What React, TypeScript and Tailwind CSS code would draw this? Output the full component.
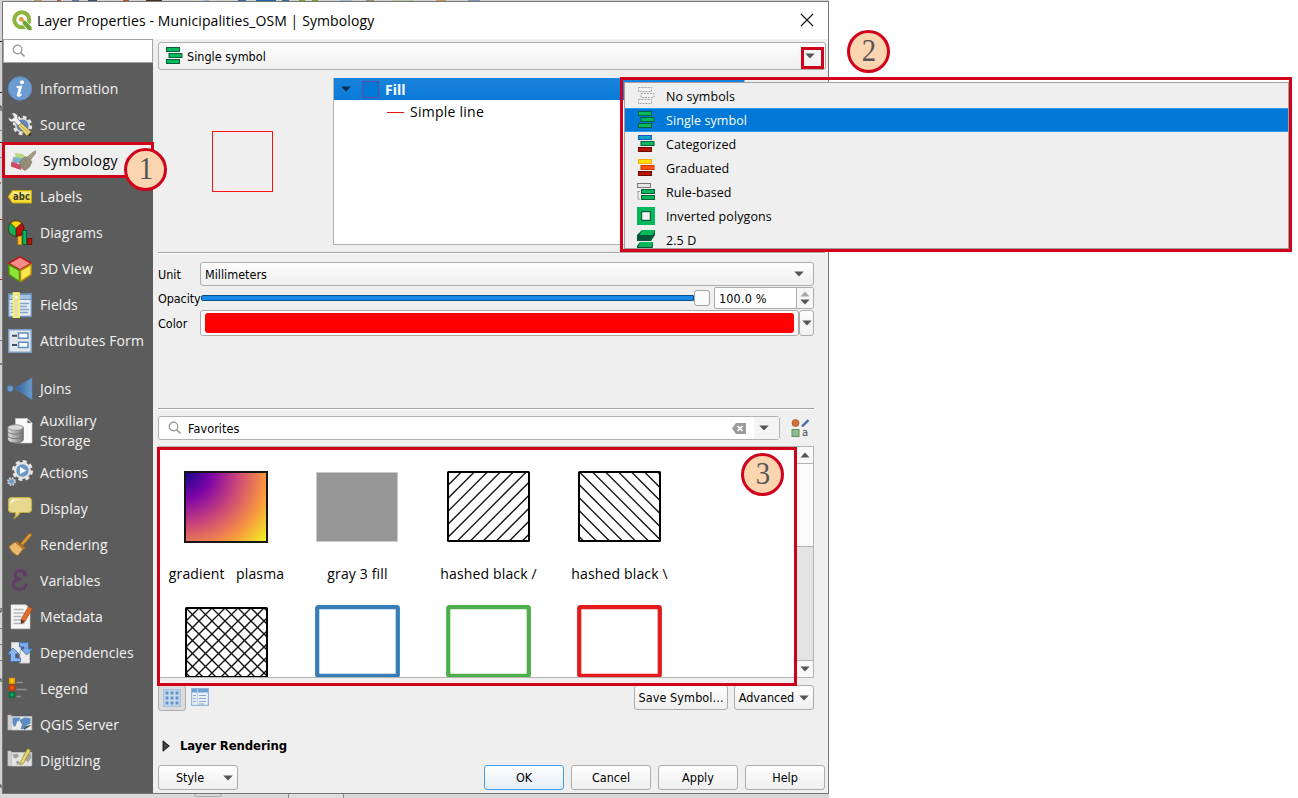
import React from "react";

/* ---------- Sidebar icons (26 x 26) ---------- */

const Svg = ({ children }: { children: React.ReactNode }) => (
  <svg width="26" height="26" viewBox="0 0 26 26" className="shrink-0">
    {children}
  </svg>
);

const InfoIcon = () => (
  <Svg>
    <circle cx="13" cy="12.500" r="11.800" fill="#6b9bd0" stroke="#5c87bd" />
    <circle cx="15" cy="6.200" r="2" fill="#fff" />
    <path d="M9.500 10.800l5.300-.9-2.200 8.200c-.2 1 .5 1 1.600.1l.4.6c-1.600 1.700-4.700 2.400-4.300.1l1.700-6.400c.2-.8-.4-.9-2-.9z" fill="#fff" stroke="#fff" strokeWidth=".9" />
  </Svg>
);

const SourceIcon = () => (
  <Svg>
    <circle cx="15.500" cy="13.500" r="8.200" fill="none" stroke="#e6e6e6" strokeWidth="3" strokeDasharray="3.700 2.740" />
    <circle cx="15.500" cy="13.500" r="6.800" fill="#6288bb" stroke="#dcdcdc" strokeWidth="1.500" />
    <path d="M4.500 1.200C8 0 12 2.500 10.500 6.500L15.500 12l-3.300 3L7.500 9.500C4.500 11 1.200 9 1.500 5.500L5 7.200 7.200 5z" fill="#f1f1f1" stroke="#666" strokeWidth=".7" />
    <path d="M11 14.200l3.500-3.200 9.500 8.500-.8 3.500-3.700.5z" fill="#e6d478" stroke="#6f6128" strokeWidth=".8" />
    <path d="M13.500 13.500l8 7.500" stroke="#b5a14d" strokeWidth=".8" />
    <path d="M22.500 21l2 .5-1 2.200-2.500-.2z" fill="#33301c" />
  </Svg>
);

const SymbologyIcon = () => (
  <Svg>
    <path d="M5 5l8 1 4 5-11 3z" fill="#b9d77e" />
    <path d="M3 9l11 1.500 0 4-11.500 1z" fill="#76b3d5" />
    <path d="M3.500 9.500l3 .5-.8 4-3.200-1z" fill="#8ba7b8" />
    <path d="M1.500 13.500l10 3.500-.5 5L.8 18.500z" fill="#cf4a63" />
    <path d="M16.500 9.500L24 3.500q3-1.500 2 1.200L20 12.500z" fill="#a39b83" stroke="#837b66" strokeWidth=".6" />
    <path d="M9.500 14l5.500-5.500 7 5-2.500 5.500-4.500 3.500c-3.500-1.500-5.500-4.500-5.500-8.500z" fill="#9a927e" stroke="#6e6959" strokeWidth=".6" />
    <path d="M12 13l5 7M14 11l5 7M10.500 15.500l4 5.500" stroke="#7b7564" strokeWidth=".7" />
  </Svg>
);

const LabelsIcon = () => (
  <Svg>
    <path d="M1.200 12.800L5.500 6.500h19v12.500h-19z" fill="#f5dc3c" stroke="#c9a90c" strokeLinejoin="round" />
    <path d="M3.500 11.500L6.200 7.800H23.500v3.700z" fill="#fbeb7f" />
    <text x="14.500" y="16.200" textAnchor="middle" fontSize="10" fontWeight="bold" fill="#3c3c34" className="font-['DejaVu_Sans',sans-serif]" textLength="17" lengthAdjust="spacingAndGlyphs">abc</text>
  </Svg>
);

const DiagramsIcon = () => (
  <Svg>
    <circle cx="9" cy="8.500" r="7.800" fill="#0bb35c" stroke="#4f3a06" />
    <path d="M9 8.500L3.500 3a7.800 7.800 0 0 1 11.300.2z" fill="#ffd20a" stroke="#4f3a06" strokeWidth=".8" />
    <path d="M9 8.500l5.800-5.300A7.800 7.800 0 0 1 9 16.300z" fill="#b91407" stroke="#4f1006" strokeWidth=".8" />
    <rect x="11" y="16.500" width="3.600" height="8" fill="#ffc423" stroke="#d08a05" />
    <rect x="15.700" y="10.500" width="3.800" height="14" fill="#0bb35c" stroke="#066036" />
    <rect x="20.700" y="18.500" width="4" height="6" fill="#b91407" stroke="#750b03" />
  </Svg>
);

const CubeIcon = () => (
  <Svg>
    <path d="M13 .8l11.300 6.500L13 13.800 1.700 7.300z" fill="#f58c8c" stroke="#c01515" strokeWidth="1.500" />
    <path d="M1.700 8.500L12.500 14.500v11L2 18.500z" fill="#8de336" stroke="#4e8d12" strokeWidth="1.500" />
    <path d="M24.300 8.500L13.500 14.500v11l10.500-7z" fill="#fce94f" stroke="#b48d0b" strokeWidth="1.500" />
  </Svg>
);

const FieldsIcon = () => (
  <Svg>
    <rect x="1.700" y="2" width="22.600" height="22.500" fill="#e9edf3" stroke="#6d93c1" strokeWidth="1.500" />
    <rect x="2" y="2.500" width="22" height="5" fill="#a3c4e3" stroke="#6d93c1" />
    <path d="M3.500 11.500h3M13 11.500h9M3.500 14.500h3M13 14.500h7M3.500 17.500h3M13 17.500h9M3.500 20.500h3M13 20.500h8" stroke="#84a5cb" strokeWidth="1.300" />
    <rect x="6.500" y="1" width="5.500" height="24.500" fill="#e3ddb1" stroke="#f8f360" strokeWidth="1.700" />
    <circle cx="9.300" cy="5" r="1.300" fill="#fff" />
  </Svg>
);

const FormIcon = () => (
  <Svg>
    <rect x="1.700" y="1.700" width="22.600" height="22.600" fill="#e4e7ea" stroke="#7a9cc6" strokeWidth="1.500" />
    <rect x="11.500" y="5" width="9.500" height="5.200" fill="#fff" stroke="#5e8cc0" strokeWidth="1.500" />
    <rect x="11.500" y="14.300" width="9.500" height="5.200" fill="#fff" stroke="#5e8cc0" strokeWidth="1.500" />
    <path d="M5 7.800h5M5 17h5" stroke="#41506a" strokeWidth="2" />
  </Svg>
);

const JoinsIcon = () => (
  <Svg>
    <defs>
      <linearGradient id="join" x1="0" x2="1"><stop offset="0" stopColor="#315e96" /><stop offset="1" stopColor="#6c9ccd" /></linearGradient>
    </defs>
    <path d="M8 12.500L25 1.800v22z" fill="url(#join)" stroke="#4b7eb8" strokeWidth=".6" />
    <circle cx="3.200" cy="12.500" r="2.900" fill="#699acd" stroke="#4b7eb8" strokeWidth=".6" />
  </Svg>
);

const StorageIcon = () => (
  <Svg>
    <path d="M8.500.5h11.500l5 5v19.500h-16.500z" fill="#fafafa" stroke="#d0d0d0" strokeWidth=".6" />
    <path d="M20 .5v5h5z" fill="#5d5d5d" stroke="#eee" />
    <defs>
      <linearGradient id="db" x1="0" x2="1"><stop offset="0" stopColor="#e0e0e0" /><stop offset="1" stopColor="#757575" /></linearGradient>
    </defs>
    <path d="M.8 9v13c1.500 4 14 4 15.500 0V9z" fill="url(#db)" stroke="#666" strokeWidth=".8" />
    <path d="M.8 13.500c1.500 3.500 14 3.500 15.500 0M.8 18c1.500 3.500 14 3.500 15.500 0" fill="none" stroke="#777" />
    <ellipse cx="8.500" cy="9.500" rx="7.700" ry="2.800" fill="#d8d8d8" stroke="#888" strokeWidth=".8" />
  </Svg>
);

const ActionsIcon = () => (
  <Svg>
    <circle cx="15.500" cy="10.500" r="9" fill="none" stroke="#e4e4e4" strokeWidth="3" strokeDasharray="4 3.070" />
    <circle cx="15.500" cy="10.500" r="7.300" fill="#6b97cb" stroke="#e4e4e4" strokeWidth="2.200" />
    <path d="M13 7l6.500 3.500-6.500 3.500z" fill="#fff" />
    <circle cx="4.500" cy="21.500" r="3.600" fill="none" stroke="#ddd" strokeWidth="1.600" strokeDasharray="1.600 1.230" />
    <circle cx="4.500" cy="21.500" r="2.800" fill="#6b97cb" stroke="#ddd" strokeWidth=".7" />
  </Svg>
);

const DisplayIcon = () => (
  <Svg>
    <path d="M5 1.500h16q3.500 0 3.500 3.500v8q0 3.500-3.500 3.500h-8q-2 4-5.500 5.500Q9.500 19 8.500 16.500H5q-3.500 0-3.500-3.500V5Q1.500 1.500 5 1.500z" fill="#e6d98d" stroke="#c3b047" strokeWidth="1.200" />
    <path d="M3.500 8.500q0-5 4-5h8q-7 0-9 1.500T3.500 8.500z" fill="#fff" />
  </Svg>
);

const RenderingIcon = () => (
  <Svg>
    <path d="M13.500 11.500l8.500-10q3-1 2.500 2l-8.500 10z" fill="#dc9a38" stroke="#96631a" strokeWidth=".8" />
    <path d="M9.500 9l9 6.500-2 2.500-8.500-6.500z" fill="#b9771f" stroke="#8a5a17" strokeWidth=".6" />
    <path d="M2 14.500l6-4.500 8 7-5 6.500C7 22.500 3.500 18.500 2 14.500z" fill="#e8b765" stroke="#a87026" strokeWidth=".8" />
    <path d="M4.500 17L9 12.500M6.500 19.500l5-4.500M9 22l4.500-5" stroke="#f8dba3" strokeDasharray="1 1" />
  </Svg>
);

const VariablesIcon = () => (
  <Svg>
    <path d="M18.500 6.500C17.500 1.500 8 1.500 8 6.700c0 3 2.500 4.500 6.500 4.600-4.500 0-8.500 1.200-8.500 5C6 23 17.500 22.500 19 17" fill="none" stroke="#613a68" strokeWidth="2.800" strokeLinecap="round" />
    <circle cx="18" cy="6.800" r="2" fill="#613a68" />
  </Svg>
);

const MetadataIcon = () => (
  <Svg>
    <path d="M4 .8h15l4 4v20H4z" fill="#f7f7f7" stroke="#ccc" strokeWidth=".6" />
    <path d="M6.500 5.500h10M6.500 9h11M6.500 12.500h8M6.500 16h11M6.500 19.500h11" stroke="#b5b5b5" strokeWidth="1.300" />
    <path d="M14 15.500L21.500 2.500l3.800 2.200-7.300 12.800-3.800 2z" fill="#e36e2c" stroke="#a94410" strokeWidth=".7" />
    <path d="M14 15.500l4 2-3.800 2z" fill="#3c3c3c" />
  </Svg>
);

const DependenciesIcon = () => (
  <Svg>
    <path d="M4.500 2.500h9v11h-9zM13 10h9.500v13H13z" fill="#ececec" stroke="#c5c5c5" />
    <path d="M12.500 2.500h9v6.500h4l-5.800 6-5.700-6h3V7h-4.500z" fill="#7ea9e2" stroke="#3b71b8" strokeWidth=".9" />
    <path d="M13.500 21.500h-10V14h-3l5.500-6 6 6H8.500v4h5z" fill="#8cb4e8" stroke="#3b71b8" strokeWidth=".9" />
  </Svg>
);

const LegendIcon = () => (
  <Svg>
    <rect x="2.700" y="2.500" width="4.600" height="4.600" fill="#ffd000" stroke="#f29b00" strokeWidth="1.500" />
    <rect x="2.700" y="9.500" width="4.600" height="4.600" fill="#ff5a10" stroke="#cd3b00" strokeWidth="1.500" />
    <rect x="2.700" y="16.500" width="4.600" height="4.600" fill="#0bb35c" stroke="#067039" strokeWidth="1.500" />
    <path d="M9.500 6.500h6.500M9.500 13.500h10M9.500 20.500h4.500" stroke="#8e8e8e" strokeWidth="1.600" />
  </Svg>
);

const ServerIcon = () => (
  <Svg>
    <path d="M.8 3h3.500v15H.8z" fill="#d3d3d3" stroke="#a5a5a5" strokeWidth=".6" />
    <path d="M4.300 4.500h20.500V18H4.300z" fill="#ebebeb" stroke="#c5c5c5" strokeWidth=".7" />
    <path d="M5.500 5.500h8l-1.500 3.500-2 .5-1 4-2 1.500-1.500-4zM12.500 8l5-2.500 6 .5v5.500l-3.500 1.500-2.500 4h-4l1.500-4z" fill="#5b8dc4" />
    <path d="M17 18c0-4 3-4.500 7.800-5z" fill="#555" />
  </Svg>
);

const DigitizingIcon = () => (
  <Svg>
    <path d="M.8 3h3.500v15H.8z" fill="#d3d3d3" stroke="#a5a5a5" strokeWidth=".6" />
    <path d="M4.300 4.500h20.500V18H4.300z" fill="#e4e4e2" stroke="#c5c5c5" strokeWidth=".7" />
    <path d="M5.500 6.500l5-1 1.500 2.500-2.500 2.500-2.500-.5zM16 6.500l8-1v5l-3 4-3-3zM9 13l3 0 1 3-3 1z" fill="#a3a3a0" />
    <path d="M13.500 14L20.500.8l3 1.500-7 13-3.500 1.700z" fill="#e6d96b" stroke="#998d33" strokeWidth=".8" />
  </Svg>
);

const NAV: { label: string; icon: React.FC; tall?: boolean; gap?: boolean; selected?: boolean }[] = [
  { label: "Information", icon: InfoIcon },
  { label: "Source", icon: SourceIcon },
  { label: "Symbology", icon: SymbologyIcon, selected: true },
  { label: "Labels", icon: LabelsIcon },
  { label: "Diagrams", icon: DiagramsIcon },
  { label: "3D View", icon: CubeIcon },
  { label: "Fields", icon: FieldsIcon },
  { label: "Attributes Form", icon: FormIcon },
  { label: "Joins", icon: JoinsIcon, gap: true },
  { label: "Auxiliary Storage", icon: StorageIcon, tall: true },
  { label: "Actions", icon: ActionsIcon },
  { label: "Display", icon: DisplayIcon },
  { label: "Rendering", icon: RenderingIcon },
  { label: "Variables", icon: VariablesIcon },
  { label: "Metadata", icon: MetadataIcon },
  { label: "Dependencies", icon: DependenciesIcon },
  { label: "Legend", icon: LegendIcon },
  { label: "QGIS Server", icon: ServerIcon },
  { label: "Digitizing", icon: DigitizingIcon },
];

/* ---------- Small shared drawings ---------- */

const Arrow = ({ up = false, fill = "#555" }: { up?: boolean; fill?: string }) => (
  <svg width="10" height="6" viewBox="0 0 10 6" className="shrink-0">
    <path d={up ? "M.5 5.500L5 .5l4.500 5z" : "M.3.5h9.400L5 5.500z"} fill={fill} />
  </svg>
);

const Magnifier = () => (
  <svg width="14" height="14" viewBox="0 0 14 14" className="shrink-0">
    <circle cx="5.500" cy="5.500" r="4.300" fill="none" stroke="#949494" strokeWidth="1.200" />
    <path d="M8.700 8.700l3.800 3.800" stroke="#949494" strokeWidth="1.600" />
  </svg>
);

type Bar = [number, string, string];

const Bars = ({ bars, dashed }: { bars: Bar[]; dashed?: boolean }) => (
  <svg width="18" height="18" viewBox="0 0 18 18" className="shrink-0">
    {bars.map(([x, fill, stroke], i) => (
      <rect key={i} x={x + 0.5} y={[0.5, 6.5, 12.5][i]} width="13" height="4" fill={fill} stroke={stroke} strokeDasharray={dashed ? "2 1" : undefined} />
    ))}
  </svg>
);

const G = "#04b85b";
const GD = "#07603a";
const SingleIcon = () => <Bars bars={[[1, G, GD], [3.5, G, GD], [1, G, GD]]} />;

const RuleIcon = () => (
  <svg width="18" height="18" viewBox="0 0 18 18" className="shrink-0">
    <rect x=".5" y=".5" width="13" height="4" fill="#e6e6e6" stroke="#777" />
    <path d="M1 8v8.500M1 8.500h2M1 16h2" stroke="#a0a0a0" fill="none" />
    <rect x="4.500" y="6.500" width="13" height="4" fill={G} stroke={GD} />
    <rect x="4.500" y="12.500" width="13" height="4" fill={G} stroke={GD} />
  </svg>
);

const InvertedIcon = () => (
  <svg width="18" height="18" viewBox="0 0 18 18" className="shrink-0">
    <rect width="18" height="18" fill={G} />
    <rect x="4.600" y="4.600" width="8.800" height="8.800" fill="#f0f0f0" stroke="#07603a" strokeWidth="1.200" />
  </svg>
);

const DepthIcon = () => (
  <svg width="18" height="20" viewBox="0 0 18 20" className="shrink-0">
    <path d="M5 0h13v5l-4 6H0V5z" fill="#07563a" />
    <path d="M5 0h13l-2 5H2.500z" fill={G} />
    <path d="M3 12h13v5l-2 3H0v-4z" fill="#07563a" />
    <path d="M3 12h13l-1.500 5H1.500z" fill={G} />
  </svg>
);

const MENU: { label: string; icon: React.ReactNode; active?: boolean }[] = [
  { label: "No symbols", icon: <Bars dashed bars={[[1, "#f2f2f2", "#a5a5a5"], [3.5, "#f2f2f2", "#a5a5a5"], [1, "#f2f2f2", "#a5a5a5"]]} /> },
  { label: "Single symbol", icon: <SingleIcon />, active: true },
  { label: "Categorized", icon: <Bars bars={[[1, "#0aa6c4", "#1b57c4"], [3.5, G, GD], [1, "#b91407", "#6d0a03"]]} /> },
  { label: "Graduated", icon: <Bars bars={[[1, "#ffe000", "#ffac0a"], [3.5, "#ff5410", "#cd3b00"], [1, "#b91407", "#6d0a03"]]} /> },
  { label: "Rule-based", icon: <RuleIcon /> },
  { label: "Inverted polygons", icon: <InvertedIcon /> },
  { label: "2.5 D", icon: <DepthIcon /> },
];

const STEP = 13;
const range = (from: number, to: number) => Array.from({ length: Math.ceil((to - from) / STEP) }, (_, i) => from + i * STEP);

const Hatch = ({ id, up, down }: { id: string; up?: number; down?: number }) => (
  <svg width="83" height="71" viewBox="0 0 83 71">
    <clipPath id={id}><rect x="1" y="1" width="81" height="69" /></clipPath>
    <g clipPath={`url(#${id})`} stroke="#111" strokeWidth="1.350">
      {up !== undefined && range(up, 160).map((c) => <path key={c} d={`M${c} 0L${c - 72} 72`} />)}
      {down !== undefined && range(down - 78, 84).map((c) => <path key={c} d={`M${c} 0L${c + 72} 72`} />)}
    </g>
    <rect x="1" y="1" width="81" height="69" rx=".5" fill="none" stroke="#000" strokeWidth="2" />
  </svg>
);

const Outline = ({ color }: { color: string }) => (
  <svg width="85" height="73" viewBox="0 0 85 73">
    <rect x="2.200" y="2.200" width="80.600" height="68.600" rx="1" fill="#fff" stroke={color} strokeWidth="4.200" />
  </svg>
);

const PlasmaSwatch = () => (
  <svg width="84" height="72" viewBox="0 0 84 72">
    <defs>
      <radialGradient id="plasma" gradientUnits="userSpaceOnUse" cx="0" cy="0" r="109">
        <stop offset="0" stopColor="#0d0887" />
        <stop offset=".25" stopColor="#7e03a8" />
        <stop offset=".5" stopColor="#cc4778" />
        <stop offset=".75" stopColor="#f89540" />
        <stop offset="1" stopColor="#f0f921" />
      </radialGradient>
    </defs>
    <rect x="1" y="1" width="82" height="70" fill="url(#plasma)" stroke="#151515" strokeWidth="2" />
  </svg>
);

const GraySwatch = () => (
  <svg width="82" height="70" viewBox="0 0 82 70">
    <rect x=".5" y=".5" width="81" height="69" fill="#969696" stroke="#c9c9c9" />
  </svg>
);

const Step = ({ n, place }: { n: number; place: string }) => (
  <div className={`absolute flex size-[43px] items-center justify-center rounded-full border-[3px] border-[#d0021b] bg-[#fad5b0] pb-[3px] font-['Liberation_Serif',serif] text-[32px] leading-none text-[#555] ${place}`}>
    <span className="scale-x-90">{n}</span>
  </div>
);

const button = "flex items-center rounded-[3px] border border-[#adadad] bg-linear-to-b from-[#fefefe] to-[#efefef]";

const Text = ({ children, className = "" }: { children: React.ReactNode; className?: string }) => (
  <span className={`pt-[2px] ${className}`}>{children}</span>
);

/* Sliver of the main window's toolbar showing above the dialog */
const TOOLBAR: [number, number, string][] = [
  [34, 8, "#b79b6a"], [57, 4, "#c1532b"], [72, 7, "#4d7aa5"], [88, 9, "#36506e"], [123, 6, "#c24a1f"], [146, 16, "#3d3128"],
  [204, 5, "#9dbbd6"], [238, 8, "#2c64a0"], [256, 20, "#1f5fa0"], [282, 7, "#36638f"], [299, 6, "#7ca332"], [312, 6, "#7ca332"],
  [340, 12, "#a8bcd0"], [366, 8, "#a08c70"], [392, 22, "#b8c9a9"], [436, 10, "#c89a65"], [468, 12, "#7e98b5"],
];

export default function App() {
  return (
    <div className="relative h-[798px] w-[1298px] overflow-hidden bg-white font-['DejaVu_Sans_Condensed','DejaVu_Sans',sans-serif] text-[12.5px] leading-none whitespace-nowrap text-black">
      <div className="flex h-full w-[829px] flex-col bg-[#d3d3d3]">
        <svg width="829" height="1" viewBox="0 0 829 1" className="shrink-0">
          {TOOLBAR.map(([x, w, fill]) => <rect key={x} x={x} y="0" width={w} height="1" fill={fill} />)}
        </svg>
        <div className="flex h-[793px] shrink-0">
          <svg width="2" height="793" viewBox="0 0 2 793" className="shrink-0">
            <path d="M0 40.500h2M0 91.500h2M0 141.500h2M0 182h1M0 363h2" stroke="#222" />
            <path d="M0 129.500h2M0 156.500h2M0 339.500h2M0 627.500h2M0 643.500h2M0 659.500h2" stroke="#888" />
            <path d="M0 218.500h2M0 278.500h2" stroke="#c02020" />
            <path d="M0 105h1v5M0 611h1v-4M0 678h1v3M0 784h1v3" stroke="#333" fill="none" />
          </svg>
          <div className="flex w-[827px] flex-col border border-[#777] bg-[#efefef]">
            {/* Title bar */}
            <div className="flex h-[37px] shrink-0 items-center bg-white pr-[14px] pl-[9px] font-['Open_Sans',sans-serif] text-[14px]">
              <svg width="21" height="21" viewBox="0 0 21 21">
                <circle cx="9.800" cy="9.800" r="7.500" fill="none" stroke="#8cb53c" strokeWidth="4" />
                <path d="M9.500 9.500l4 1L20 17v3.500h-4L10.500 14z" fill="#6da336" stroke="#fff" strokeWidth=".8" />
                <circle cx="9.300" cy="9.300" r="2.300" fill="#f09423" />
              </svg>
              <span className="ml-[4px] tracking-[0.1px]">Layer Properties - Municipalities_OSM | Symbology</span>
              <svg width="14" height="14" viewBox="0 0 14 14" className="mb-px ml-auto">
                <path d="M1 1l12 12M13 1L1 13" stroke="#111" strokeWidth="1.100" />
              </svg>
            </div>

            <div className="flex min-h-0 flex-1">
              {/* Sidebar */}
              <nav className="flex w-[150px] flex-col bg-[#5c5c5c] font-['Open_Sans',sans-serif] text-[14px] tracking-[0.08px] text-[#f3f3f3]">
                <div className="mb-[8px] flex h-[24px] shrink-0 items-center border border-[#a5a5a5] bg-white pl-[8px]">
                  <Magnifier />
                </div>
                {NAV.map(({ label, icon: Icon, tall, gap, selected }) => (
                  <div
                    key={label}
                    className={`flex shrink-0 items-center gap-[7px] ${tall ? "h-[48px] leading-[20px]" : selected ? "h-[35px]" : "h-[36px]"} ${gap ? "mt-[12px]" : ""} ${selected ? "mb-px bg-[#efefef] pl-[7px] tracking-[0.4px] text-black" : "pl-[4px]"}`}
                  >
                    <Icon />
                    <span className={tall ? "w-[64px] whitespace-normal" : ""}>{label}</span>
                  </div>
                ))}
              </nav>

              {/* Symbology page */}
              <main className="flex w-[675px] flex-col pt-[3px] pr-[2px] pl-[5px]">
                <div className={`${button} h-[28px] w-[668px] shrink-0 pr-[10px] pl-[6px]`}>
                  <SingleIcon />
                  <Text className="ml-[4px]">Single symbol</Text>
                  <span className="ml-auto"><Arrow /></span>
                </div>

                <div className="mt-[8px] flex h-[167px] shrink-0">
                  <div className="flex w-[175px] items-center justify-center pr-[7px]">
                    <div className="size-[61px] border border-[#ff1010]" />
                  </div>
                  <div className="w-[412px] border border-[#b3b3b3] bg-white">
                    <div className="-mt-px flex h-[22px] items-center bg-linear-to-b from-[#1883dc] to-[#0a7ad8] pl-[7px] text-white">
                      <Arrow fill="#0b2c4d" />
                      <div className="ml-[11px] size-[17px] border border-[#5c4ca0] bg-[#0078d7]" />
                      <b className="ml-[6px] pt-[2px] font-['Open_Sans',sans-serif] text-[14px]">Fill</b>
                    </div>
                    <div className="flex h-[24px] items-center pl-[53px] font-['Open_Sans',sans-serif] text-[14px] tracking-[0.25px]">
                      <div className="mr-[6px] h-px w-[17px] bg-[#e81010]" />
                      Simple line
                    </div>
                  </div>
                </div>

                <div className="mt-[7px] h-[2px] w-[667px] shrink-0 border-t border-[#a3a3a3] bg-white" />

                <div className="mt-[8px] flex h-[24px] w-[656px] shrink-0 items-center">
                  <Text className="w-[42px]">Unit</Text>
                  <div className={`${button} h-full flex-1 justify-between pr-[9px] pl-[4px]`}>
                    <Text>Millimeters</Text>
                    <Arrow />
                  </div>
                </div>

                <div className="mt-px flex h-[22px] w-[656px] shrink-0 items-center">
                  <Text className="w-[42px] tracking-[-0.1px]">Opacity</Text>
                  <div className="flex w-[510px] items-center">
                    <div className="ml-px h-[6px] flex-1 rounded-l-[2px] border border-[#07528f] bg-[#1a88e5]" />
                    <div className="mb-px size-[16px] rounded-[3px] border border-[#a2a2a2] bg-[#fafafa]" />
                  </div>
                  <div className="ml-auto flex h-full w-[100px] rounded-[2px] border border-[#ababab] bg-white">
                    <Text className="flex flex-1 items-center pl-[4px] tracking-[0.15px]">100.0 %</Text>
                    <div className="flex w-[17px] flex-col items-center justify-center gap-[2px] border-l border-[#ababab] bg-[#f6f6f6]">
                      <Arrow up fill="#a8a8a8" />
                      <Arrow />
                    </div>
                  </div>
                </div>

                <div className="mt-px flex h-[26px] w-[656px] shrink-0 items-center">
                  <Text className="w-[42px]">Color</Text>
                  <div className="h-full flex-1 rounded-[3px] border border-[#ababab] bg-[#fafafa] px-[4px] py-[2px]">
                    <div className="h-full rounded-[3px] bg-[#ff0000]" />
                  </div>
                  <div className={`${button} h-full w-[15px] justify-center`}><Arrow /></div>
                </div>

                <div className="mt-[72px] h-[2px] w-[656px] shrink-0 border-t border-[#a3a3a3] bg-white" />

                <div className="mt-[6px] flex h-[24px] w-[656px] shrink-0 items-center">
                  <div className="flex h-full w-[622px] items-center rounded-[3px] border border-[#b0b0b0] bg-white pl-[9px]">
                    <Magnifier />
                    <Text className="ml-[6px] tracking-[0.1px]">Favorites</Text>
                    <svg width="14" height="11" viewBox="0 0 14 11" className="ml-auto">
                      <path d="M4 0h10v11H4L0 5.500z" fill="#9b9b9b" />
                      <path d="M5.500 3l5 5M10.500 3l-5 5" stroke="#fff" strokeWidth="1.500" />
                    </svg>
                    <div className="ml-[8px] flex h-full w-[25px] items-center bg-[#f4f4f4] pl-[5px]"><Arrow /></div>
                  </div>
                  <svg width="18" height="18" viewBox="0 0 18 18" className="ml-[11px]">
                    <circle cx="4.500" cy="4" r="3.500" fill="#d8703a" stroke="#a04c1e" strokeWidth=".7" />
                    <path d="M11 7.500L17.500 1" stroke="#466ca3" strokeWidth="2.400" />
                    <rect x="1" y="10.500" width="7" height="7" fill="#8db98d" stroke="#5e8f60" />
                    <text x="11" y="17" fontSize="10" fill="#444" className="font-['DejaVu_Sans',sans-serif]">a</text>
                  </svg>
                </div>

                {/* Symbol gallery */}
                <div className="mt-[6px] flex h-[232px] w-[656px] shrink-0 border border-[#b3b3b3] bg-white">
                  <div className="grid flex-1 grid-cols-[131px_131px_131px_131px] grid-rows-[134px_97px] overflow-hidden pl-[2px] font-['Open_Sans',sans-serif] text-[14px]">
                    {[
                      { name: "gradient   plasma", swatch: <PlasmaSwatch /> },
                      { name: "gray 3 fill", swatch: <GraySwatch /> },
                      { name: "hashed black /", swatch: <Hatch id="up" up={2.3} /> },
                      { name: "hashed black \\", swatch: <Hatch id="down" down={0.5} /> },
                    ].map(({ name, swatch }) => (
                      <div key={name} className="flex flex-col items-center pt-[24px]">
                        <div className="flex h-[71px] items-center pr-px">{swatch}</div>
                        <span className="mt-[25px] tracking-[0.15px] whitespace-pre">{name}</span>
                      </div>
                    ))}
                    <div className="flex justify-center pt-[26px] pr-px"><Hatch id="cross" up={2} down={0} /></div>
                    <div className="flex justify-center pt-[24px] pr-px"><Outline color="#377eb8" /></div>
                    <div className="flex justify-center pt-[24px] pr-px"><Outline color="#4daf4a" /></div>
                    <div className="flex justify-center pt-[24px] pr-px"><Outline color="#e41a1c" /></div>
                  </div>
                  <div className="flex w-[17px] flex-col border-l border-[#b3b3b3] bg-[#e4e4e4]">
                    <div className="flex h-[17px] items-center justify-center border-b border-[#b3b3b3] bg-[#f8f8f8] pb-px"><Arrow up /></div>
                    <div className="h-[83px] border-b border-[#b3b3b3] bg-[#fafafa]" />
                    <div className="mt-auto flex h-[17px] items-center justify-center border-t border-[#b3b3b3] bg-[#f8f8f8] pb-px"><Arrow /></div>
                  </div>
                </div>

                <div className="mt-[7px] flex h-[26px] w-[656px] shrink-0">
                  <div className="flex w-[28px] items-center justify-center rounded-[3px] border border-[#adadad] bg-[#dcdcdc] pb-px">
                    <svg width="18" height="18" viewBox="0 0 18 18">
                      <rect width="18" height="18" fill="#aac5e2" />
                      {[2, 7, 12].map((y) => [2, 7, 12].map((x) => (
                        <rect key={`${x}-${y}`} x={x} y={y} width="4" height="4" fill="#6595cb" stroke="#dce8f5" strokeWidth=".8" />
                      )))}
                    </svg>
                  </div>
                  <svg width="18" height="18" viewBox="0 0 18 18" className="mt-[3px] ml-[5px]">
                    <rect x=".6" y=".6" width="16.800" height="16.800" fill="#e8eff7" stroke="#8fb3d9" strokeWidth="1.200" />
                    <rect x="1" y="1" width="16" height="3.500" fill="#6f9fd3" />
                    <path d="M2 7.500h3M8 7.500h7M2 10.500h3M8 10.500h7M2 13.500h3M8 13.500h7M8 16h5" stroke="#8aa9cd" />
                    <path d="M6.500 1v16" stroke="#b9d0e8" />
                  </svg>
                  <div className={`${button} ml-auto h-[25px] w-[94px] justify-center tracking-[0.1px]`}><Text>Save Symbol...</Text></div>
                  <div className={`${button} ml-[6px] h-[25px] w-[80px] justify-center gap-[5px]`}><Text>Advanced</Text><Arrow /></div>
                </div>

                <div className="mt-[27px] flex h-[15px] shrink-0 items-center">
                  <svg width="8" height="12" viewBox="0 0 8 12" className="ml-[4px]">
                    <path d="M1 .8v10.400L7.300 6z" fill="#444" stroke="#111" strokeWidth=".9" />
                  </svg>
                  <b className="ml-[10px] text-[13px] tracking-[-0.09px]">Layer Rendering</b>
                </div>

                <div className="mt-[12px] flex h-[25px] w-[667px] shrink-0 gap-[7px]">
                  <div className={`${button} mr-auto w-[80px] justify-center gap-[19px] pl-[13px]`}><Text>Style</Text><Arrow /></div>
                  <div className="flex w-[80px] items-center justify-center rounded-[3px] border border-[#3ea2f0] bg-linear-to-b from-[#fdfeff] to-[#e6edf3]"><Text>OK</Text></div>
                  <div className={`${button} w-[80px] justify-center`}><Text>Cancel</Text></div>
                  <div className={`${button} w-[80px] justify-center`}><Text>Apply</Text></div>
                  <div className={`${button} w-[80px] justify-center`}><Text>Help</Text></div>
                </div>
              </main>
            </div>
          </div>
        </div>
        {/* Window behind the dialog, below its lower edge */}
        <div className="flex flex-1 bg-[#dadada] pl-[194px]">
          <div className="h-[3px] w-[28px] rounded-b-[3px] border border-t-0 border-[#aaa]" />
          <div className="ml-[66px] w-[56px] border-x border-[#8a8a8a] bg-[#dedede]" />
          <div className="flex-1 bg-[#d6d6d6]" />
        </div>
      </div>

      {/* Renderer menu floating over the dialog */}
      <div className="absolute top-[77px] left-[620px] h-[175px] w-[672px] border-[3px] border-[#d0021b] pt-[2px] pl-px">
        <div className="h-full overflow-hidden border border-[#a0a0a0] bg-[#efefef] pt-[1px] font-['Open_Sans',sans-serif] text-[12.5px] tracking-[0.08px]">
          {MENU.map(({ label, icon, active }) => (
            <div key={label} className={`flex h-[24px] items-center gap-[11px] pl-[12px] ${active ? "border-y border-[#2f9bf0] bg-[#0078d7] text-white" : ""}`}>
              {icon}
              <Text>{label}</Text>
            </div>
          ))}
        </div>
      </div>

      {/* Callout frames and step numbers */}
      <div className="absolute top-[142px] left-[2px] h-[36px] w-[152px] border-[3px] border-[#d0021b]" />
      <div className="absolute top-[47px] left-[801px] h-[22px] w-[23px] border-[3px] border-[#d0021b]" />
      <div className="absolute top-[447px] left-[157px] h-[239px] w-[640px] border-[3px] border-[#d0021b]" />
      <Step n={1} place="top-[148px] left-[124px]" />
      <Step n={2} place="top-[30px] left-[847px]" />
      <Step n={3} place="top-[453px] left-[741px]" />
    </div>
  );
}
